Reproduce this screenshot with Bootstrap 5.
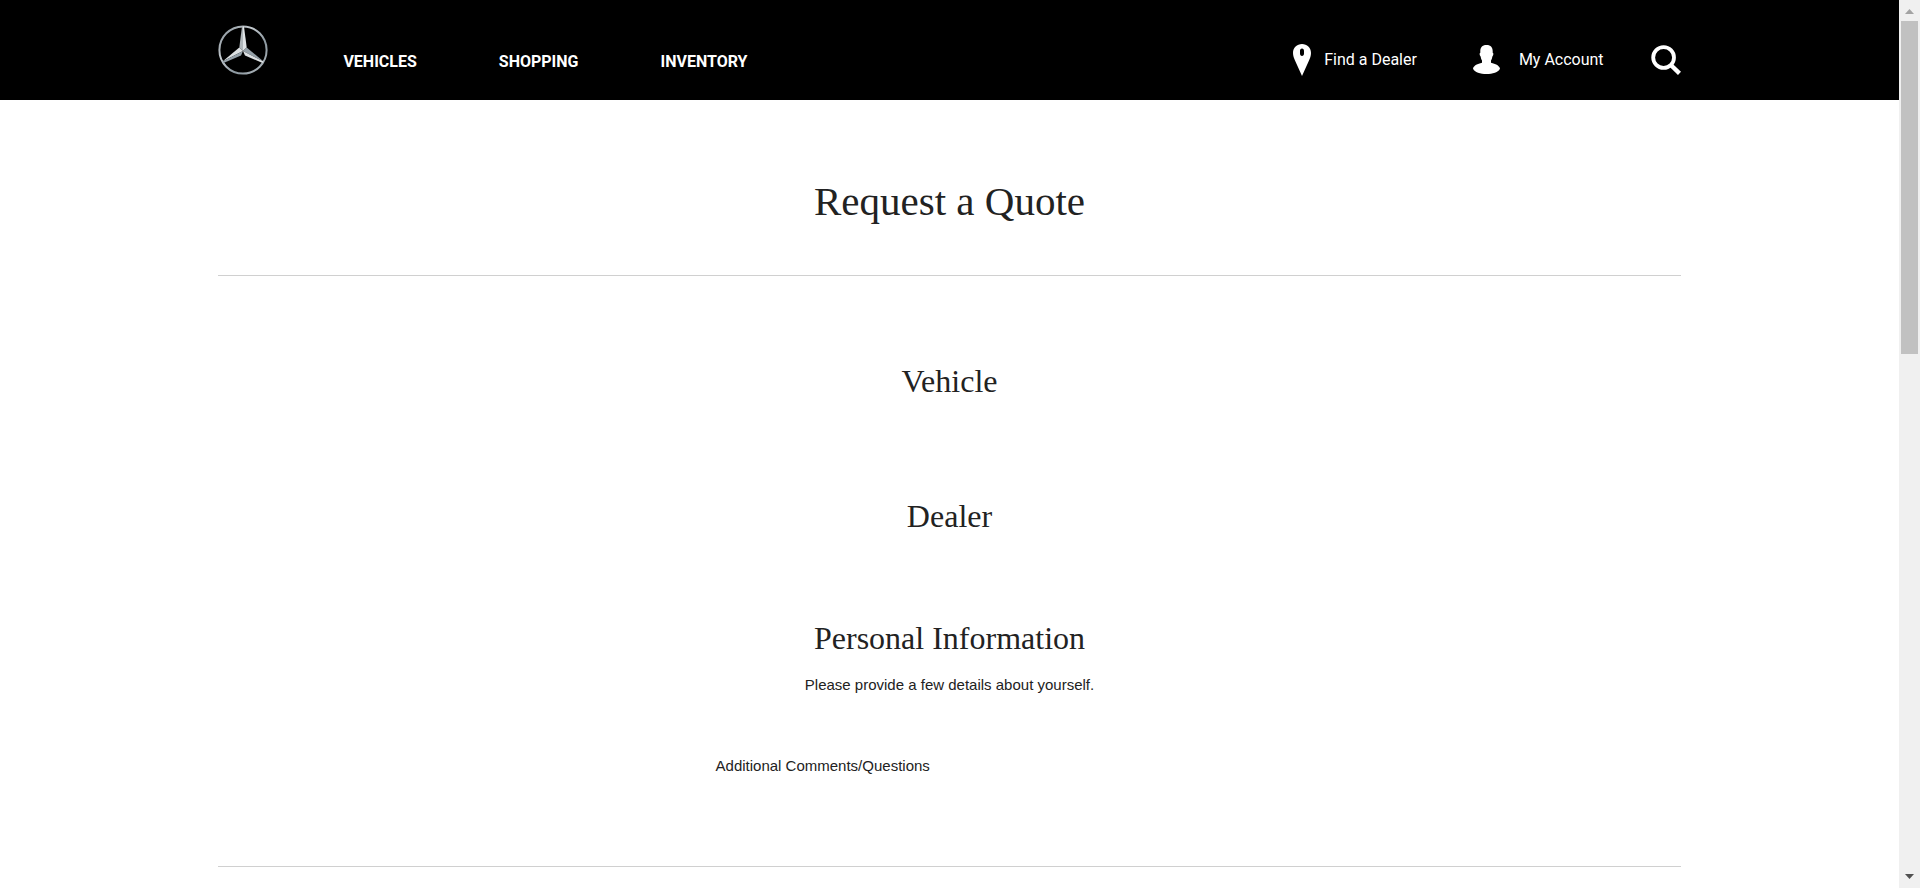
<!DOCTYPE html>
<html lang="en">
<head>
<meta charset="utf-8">
<meta name="viewport" content="width=device-width, initial-scale=1">
<title>Request a Quote</title>
<link rel="stylesheet" href="https://cdn.jsdelivr.net/npm/bootstrap@5.3.0/dist/css/bootstrap.min.css">
<style>
body { font-family: "Liberation Sans", Arial, sans-serif; font-size: 15px; line-height: 24px; color: #222; background: #fff; }
.page-width { width: 77%; margin: 0 auto; }
.site-header { background: #000; font-family: Roboto, sans-serif; font-size: 16px; height: 100px; }
.site-header a { color: #fff; text-decoration: none; white-space: nowrap; }
.brand-link { margin-right: 75px; }
.main-links { gap: 82px; font-weight: 700; padding-top: 24px; }
.tool-links { padding-top: 20px; }
.dealer-link { gap: 13px; margin-right: 56px; }
.account-link { gap: 19px; margin-right: 47px; }
.search-btn { background: none; border: 0; padding: 0; }
svg { display: block; }
h1, h2 { font-family: "Liberation Serif", "Times New Roman", serif; font-weight: 400; margin: 0; text-align: center; }
h1 { font-size: 41px; line-height: 60px; padding: 71px 0 44px; }
h2 { font-size: 32px; line-height: 40px; }
.rule-below { border-bottom: 1px solid #d0d0d0; }
.vehicle-part { padding: 85px 0 95px; }
.dealer-part { padding-bottom: 82px; }
.personal-part { padding-bottom: 88px; }
.intro { margin: 15px 0 57px; text-align: center; }
.comments { width: 32%; margin: 0 auto; }
.scroll-track { width: 21px; background: #f0f0f0; padding: 9px 2px; }
.scroll-thumb { width: 17px; height: 38.3%; background: #c1c1c1; margin-top: 7px; }
</style>
</head>
<body>
<div class="d-flex vh-100 overflow-hidden">
  <div class="flex-grow-1 overflow-hidden">
    <header class="site-header">
      <div class="page-width h-100 d-flex align-items-center">
        <a href="#" class="brand-link" aria-label="Home">
          <svg width="50" height="52" viewBox="0 0 50 52">
            <defs>
              <linearGradient id="ring" x1="0" y1="0" x2="1" y2="1"><stop offset="0" stop-color="#7d8890"/><stop offset=".35" stop-color="#c5cbd0"/><stop offset=".65" stop-color="#8b979f"/><stop offset="1" stop-color="#b4bbc0"/></linearGradient>
            </defs>
            <circle cx="25" cy="26" r="23.6" fill="none" stroke="url(#ring)" stroke-width="2"/>
            <path d="M24 2.500h1V27L21.300 23.500z" fill="#b0b7bb"/><path d="M26 2.500h-1V27L28.700 23.500z" fill="#dfe3e5"/>
            <path d="M4.500 37.500L21.300 23.500L25 27z" fill="#dde1e3"/><path d="M4.500 37.500L5.500 39L23 31.500L25 27z" fill="#95a1a9"/>
            <path d="M45.500 37.500L28.700 23.500L25 27z" fill="#95a1a9"/><path d="M45.500 37.500L44.500 39L27 31.500L25 27z" fill="#dde1e3"/>
          </svg>
        </a>
        <nav class="main-links d-flex">
          <a href="#">VEHICLES</a>
          <a href="#">SHOPPING</a>
          <a href="#">INVENTORY</a>
        </nav>
        <div class="tool-links d-flex align-items-center ms-auto">
          <a href="#" class="dealer-link d-flex align-items-center">
            <svg width="18" height="32" viewBox="0 0 18 32"><path fill="#fff" fill-rule="evenodd" d="M9 0C4 0 0 3.700 0 9c0 3 1 5 2 7.500L9 32l7-15.500C17 14 18 12 18 9c0-5.300-4-9-9-9zM9 4.500c-1.300 0-2 1-2 2.500v2.500c0 1.500.7 2.500 2 2.500s2-1 2-2.500V7c0-1.500-.7-2.500-2-2.500z"/></svg>
            Find a Dealer
          </a>
          <a href="#" class="account-link d-flex align-items-center">
            <svg width="27" height="30" viewBox="0 0 27 30"><path fill="#fff" d="M13.500 0c4.500 0 6.200 2.500 6.200 6.300v1.500c1 .2 1 2-.3 3.700-.4 2-.8 3-1.400 4v2.300c4.500 1.200 8 2.500 9 5.700C25.500 27.500 19.500 29 13.500 29S1.500 27.500 0 23.500c1-3.200 4.500-4.500 9-5.700v-2.300c-.6-1-1-2-1.400-4-1.300-1.700-1.300-3.500-.3-3.700V6.300C7.300 2.500 9 0 13.500 0z"/></svg>
            My Account
          </a>
          <button type="button" class="search-btn" aria-label="Search">
            <svg width="30" height="30" viewBox="0 0 30 30" fill="none" stroke="#fff"><circle cx="12.600" cy="12.500" r="10.400" stroke-width="3.800"/><path d="M19.800 20L28.500 28.300" stroke-width="4.400"/></svg>
          </button>
        </div>
      </div>
    </header>
    <main class="page-width">
      <h1 class="rule-below">Request a Quote</h1>
      <section class="vehicle-part"><h2>Vehicle</h2></section>
      <section class="dealer-part"><h2>Dealer</h2></section>
      <section class="personal-part rule-below">
        <h2>Personal Information</h2>
        <p class="intro">Please provide a few details about yourself.</p>
        <div class="comments">Additional Comments/Questions</div>
      </section>
    </main>
  </div>
  <div class="scroll-track d-flex flex-column align-items-center flex-shrink-0">
    <svg width="9" height="5" viewBox="0 0 9 5"><path d="M0 5L4.500 0L9 5z" fill="#a3a3a3"/></svg>
    <div class="scroll-thumb"></div>
    <svg class="mt-auto" width="9" height="5" viewBox="0 0 9 5"><path d="M0 0L4.500 5L9 0z" fill="#505050"/></svg>
  </div>
</div>
<script src="https://cdn.jsdelivr.net/npm/bootstrap@5.3.0/dist/js/bootstrap.bundle.min.js"></script>
</body>
</html>
